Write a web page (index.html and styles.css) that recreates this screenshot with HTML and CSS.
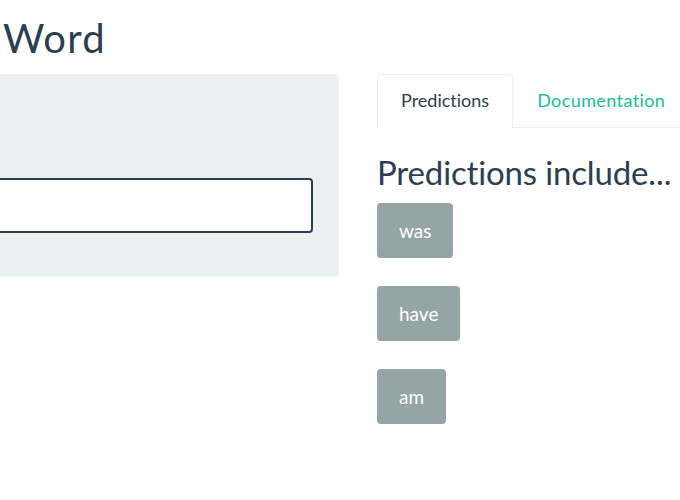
FILE: index.html
```html
<!DOCTYPE html>
<html>
<head>
<meta charset="utf-8">
<link rel="stylesheet" href="styles.css">
</head>
<body>
<h1 class="title">Word</h1>
<div class="row">
  <div class="sidebar">
    <div class="well">
      <input class="word-input" type="text" value="">
    </div>
  </div>
  <div class="main">
    <ul class="tabs">
      <li class="tab active">Predictions</li>
      <li class="tab">Documentation</li>
    </ul>
    <div class="tab-content">
      <h2 class="subtitle">Predictions include...</h2>
      <div class="preds">
        <span class="btn">was</span>
        <span class="btn">have</span>
        <span class="btn">am</span>
      </div>
    </div>
  </div>
</div>
</body>
</html>
```
FILE: styles.css
```css
html, body {
  margin: 0;
  padding: 0;
  background: #fff;
  font-family: Lato, "Open Sans", sans-serif;
  color: #2c3e50;
  font-variant-ligatures: none;
}
.title {
  margin: 0;
  padding: 16px 0 0 3px;
  font-size: 40px;
  letter-spacing: 1.2px;
  font-weight: 400;
  line-height: 1.1;
  box-sizing: border-box;
  height: 74px;
}
.row {
  display: flex;
  gap: 39px;
}
.sidebar {
  width: 339px;
  flex: none;
}
.well {
  background: #ecf0f1;
  border-radius: 0 4px 4px 0;
  height: 203px;
  box-sizing: border-box;
  padding: 104px 26px 0 0;
}
.word-input {
  display: block;
  width: 100%;
  height: 55px;
  box-sizing: border-box;
  border: 2px solid #2c3e50;
  border-left: none;
  border-radius: 0 4px 4px 0;
  background: #fff;
  outline: none;
  margin: 0;
}
.main {
  flex: 1;
  min-width: 0;
  margin-left: -1px;
}
.tabs {
  list-style: none;
  margin: 0;
  padding: 0;
  display: flex;
  border-bottom: 1px solid #ecf0f1;
  height: 54px;
  box-sizing: border-box;
}
.tab {
  font-size: 18px;
  line-height: 25px;
  padding: 13px 23px 14px;
  color: #18bc9c;
  border: 1px solid transparent;
  border-bottom: none;
  border-radius: 4px 4px 0 0;
  margin-bottom: -1px;
  white-space: nowrap;
}
.tab.active {
  color: #2c3e50;
  border-color: #ecf0f1;
  background: #fff;
  height: 54px;
  box-sizing: border-box;
}
.tab + .tab {
  letter-spacing: 0.4px;
}
.subtitle {
  margin: 0;
  padding-top: 26px;
  font-size: 33px;
  letter-spacing: -0.15px;
  font-weight: 400;
  line-height: 1.1;
  white-space: nowrap;
}
.preds {
  display: flex;
  flex-direction: column;
  align-items: flex-start;
  gap: 28px;
  margin-top: 13px;
}
.btn {
  display: block;
  background: #95a5a6;
  color: #fff;
  font-size: 19px;
  line-height: 25px;
  padding: 15px 22px;
  border-radius: 4px;
}
```
